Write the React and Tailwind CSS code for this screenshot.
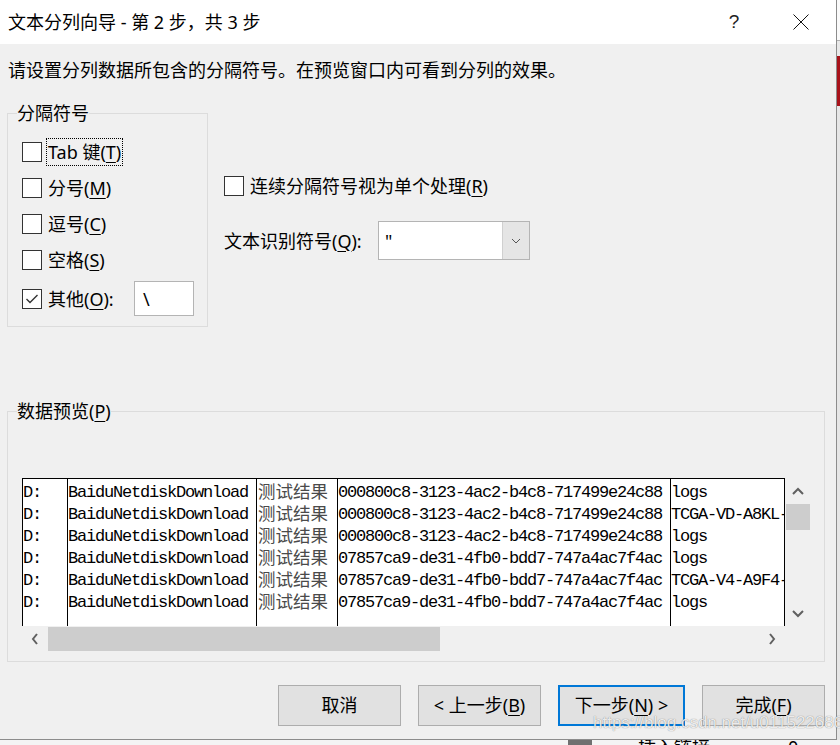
import React from 'react';

const ui = "font-['Noto_Sans','Noto_Sans_CJK_SC',sans-serif]";
const mono = "font-['Liberation_Mono','Noto_Sans_CJK_SC',monospace] text-[17px] tracking-[-1.2px] text-black";
const cjk = "font-['Noto_Sans_CJK_SC',sans-serif] text-[17.5px] text-[#4a4a4a]";

const ROWS = [
  ['000800c8-3123-4ac2-b4c8-717499e24c88', 'logs'],
  ['000800c8-3123-4ac2-b4c8-717499e24c88', 'TCGA-VD-A8KL-01A'],
  ['000800c8-3123-4ac2-b4c8-717499e24c88', 'logs'],
  ['07857ca9-de31-4fb0-bdd7-747a4ac7f4ac', 'logs'],
  ['07857ca9-de31-4fb0-bdd7-747a4ac7f4ac', 'TCGA-V4-A9F4-01A'],
  ['07857ca9-de31-4fb0-bdd7-747a4ac7f4ac', 'logs'],
];

function Box({ checked }) {
  return (
    <span className="w-[20px] h-[20px] shrink-0 border border-[#333] bg-white flex items-center justify-center">
      {checked && (
        <svg width="16" height="16" viewBox="0 0 16 16">
          <polyline points="2.5,8 6,11.5 13.5,4" fill="none" stroke="#333" strokeWidth="1.4" />
        </svg>
      )}
    </span>
  );
}

function Key({ k }) {
  return <u className="underline underline-offset-[3px] decoration-1">{k}</u>;
}

function Chevron({ dir }) {
  const pts = {
    up: '1,7 6,2 11,7',
    down: '1,2 6,7 11,2',
    left: '6,1 2,6 6,11',
    right: '2,1 6,6 2,11',
  }[dir];
  const vert = dir === 'up' || dir === 'down';
  return (
    <svg width={vert ? 12 : 8} height={vert ? 9 : 12} viewBox={vert ? '0 0 12 9' : '0 0 8 12'}>
      <polyline points={pts} fill="none" stroke="#606060" strokeWidth="2" />
    </svg>
  );
}

function Option({ label, k, focus, checked }) {
  return (
    <div className="flex items-center h-[36px]">
      <Box checked={checked} />
      <span className={`ml-[4px] px-[1px] py-[1px] leading-[24px] border ${focus ? 'border-dotted border-black' : 'border-transparent'}`}>
        {label}(<Key k={k} />)
      </span>
    </div>
  );
}

function Btn({ children, primary, w = 'w-[123px]' }) {
  return (
    <div className={`${w} h-[41px] flex items-center justify-center bg-[#e1e1e1] text-[18px] ${primary ? 'border-2 border-[#0078d7]' : 'border border-[#adadad]'}`}>
      {children}
    </div>
  );
}

export default function App() {
  return (
    <div className={`w-[840px] h-[745px] overflow-hidden bg-[#f4f4f4] flex flex-col ${ui} text-black`}>
      <div className="flex h-[740px] shrink-0">
        <div className="relative w-[837px] flex flex-col border-r border-b border-[#8c8c8c] bg-[#f0f0f0]">
          {/* title bar */}
          <div className="h-[44px] shrink-0 bg-white flex items-center pl-[8px]">
            <span className="text-[18px] leading-[24px]">文本分列向导 - 第 2 步，共 3 步</span>
            <span className="ml-auto w-[24px] text-center text-[19px] font-light font-['Liberation_Sans',sans-serif] text-[#222]">?</span>
            <div className="ml-[32px] w-[46px] flex justify-center mr-[12px]">
              <svg width="16" height="16" viewBox="0 0 16 16">
                <line x1="0.5" y1="0.5" x2="15.5" y2="15.5" stroke="#111" strokeWidth="1" />
                <line x1="15.5" y1="0.5" x2="0.5" y2="15.5" stroke="#111" strokeWidth="1" />
              </svg>
            </div>
          </div>

          {/* body */}
          <div className="flex-1 pl-[7px] pr-[11px] text-[18px]">
            <div className="pt-[14px] pl-[1px] leading-[24px]">请设置分列数据所包含的分隔符号。在预览窗口内可看到分列的效果。</div>

            <div className="mt-[19px] flex items-start">
              <fieldset className="w-[201px] border border-[#dcdcdc] pl-[14px] pt-[9px] pb-[10px]">
                <legend className="ml-[-5px] leading-[24px]">分隔符号</legend>
                <Option label="Tab 键" k="T" focus />
                <Option label="分号" k="M" />
                <Option label="逗号" k="C" />
                <Option label="空格" k="S" />
                <div className="mt-[3px] h-[35px] flex items-center">
                  <Box checked />
                  <span className="ml-[4px] w-[88px] px-[2px] leading-[24px]">其他(<Key k="O" />):</span>
                  <div className="w-[60px] h-[35px] bg-white border border-[#b4b4b4] pl-[8px] flex items-center leading-[24px]">\</div>
                </div>
              </fieldset>

              <div className="ml-[16px] pt-[73px] flex flex-col">
                <div className="h-[24px] flex items-center">
                  <Box />
                  <span className="ml-[6px] leading-[24px]">连续分隔符号视为单个处理(<Key k="R" />)</span>
                </div>
                <div className="mt-[23px] h-[39px] flex items-center">
                  <span className="w-[154px] leading-[24px]">文本识别符号(<Key k="Q" />):</span>
                  <div className="w-[152px] h-[39px] bg-white border border-[#b4b4b4] flex">
                    <div className="flex-1 pl-[6px] flex items-center leading-[24px]">"</div>
                    <div className="w-[27px] bg-[#e5e5e5] border-l border-[#d0d0d0] flex items-center justify-center">
                      <svg width="10" height="6" viewBox="0 0 10 6">
                        <polyline points="1,1 5,5 9,1" fill="none" stroke="#555" strokeWidth="1" />
                      </svg>
                    </div>
                  </div>
                </div>
              </div>
            </div>

            <fieldset className="mt-[72px] border border-[#dcdcdc] pl-[14px] pt-[55px] pb-[10px]">
              <legend className="ml-[-5px] leading-[24px]">数据预览(<Key k="P" />)</legend>
              <div className="flex">
                <div className="w-[763px] flex flex-col">
                  <div className="h-[148px] border-t border-black bg-white flex overflow-hidden">
                    <div className={`w-[45px] border-l border-black pt-[3px] ${mono}`}>
                      {ROWS.map((_, i) => <div key={i} className="h-[22px] leading-[22px]">D:</div>)}
                    </div>
                    <div className={`w-[189px] border-l border-black pt-[3px] ${mono}`}>
                      {ROWS.map((_, i) => <div key={i} className="h-[22px] leading-[22px] whitespace-nowrap">BaiduNetdiskDownload</div>)}
                    </div>
                    <div className={`w-[81px] border-l border-black pt-[1px] pl-[1px] ${cjk}`}>
                      {ROWS.map((_, i) => <div key={i} className="h-[22px] leading-[22px] whitespace-nowrap">测试结果</div>)}
                    </div>
                    <div className={`w-[333px] border-l border-black pt-[3px] ${mono}`}>
                      {ROWS.map((r, i) => <div key={i} className="h-[22px] leading-[22px] whitespace-nowrap">{r[0]}</div>)}
                    </div>
                    <div className={`w-[115px] border-l border-r border-black pt-[3px] overflow-hidden ${mono}`}>
                      {ROWS.map((r, i) => <div key={i} className="h-[22px] leading-[22px] whitespace-nowrap">{r[1]}</div>)}
                    </div>
                  </div>
                  <div className="h-[25px] flex">
                    <div className="w-[26px] flex items-center justify-center"><Chevron dir="left" /></div>
                    <div className="w-[392px] h-[24px] self-end bg-[#cdcdcd]" />
                    <div className="flex-1" />
                    <div className="w-[26px] flex items-center justify-center"><Chevron dir="right" /></div>
                  </div>
                </div>
                <div className="w-[25px] h-[148px] flex flex-col">
                  <div className="h-[26px] flex items-center justify-center pl-[1px]"><Chevron dir="up" /></div>
                  <div className="h-[26px] w-[24px] ml-[1px] bg-[#cdcdcd]" />
                  <div className="flex-1" />
                  <div className="h-[26px] flex items-center justify-center pl-[1px]"><Chevron dir="down" /></div>
                </div>
              </div>
            </fieldset>

            <div className="mt-[23px] flex justify-end gap-[17px]">
              <Btn>取消</Btn>
              <Btn>&lt; 上一步(<Key k="B" />)</Btn>
              <Btn primary w="w-[127px]">下一步(<Key k="N" />) &gt;</Btn>
              <Btn>完成(<Key k="F" />)</Btn>
            </div>
          </div>

          {/* watermark */}
          <div className="absolute left-[593px] top-[712px] text-[17px] leading-[22px] font-['Liberation_Sans',sans-serif] text-white/85 [text-shadow:0_0_1px_rgba(0,0,0,0.55)] pointer-events-none">
            https://blog.csdn.net/u011522686
          </div>
        </div>
        <div className="w-[3px] flex flex-col">
          <div className="h-[40px] bg-[#fafafa]" />
          <div className="h-[1px] bg-[#b0b0b0]" />
          <div className="h-[15px] bg-[#e8e8e8]" />
          <div className="h-[50px] bg-[#a8121a]" />
          <div className="flex-1 bg-[#e6e6e6]" />
        </div>
      </div>
      <div className="h-[5px] flex overflow-hidden">
        <div className="ml-[568px] w-[24px] bg-[#707070]" />
        <div className="ml-[46px] text-[18px] leading-[20px] mt-[-3px]">插入链接</div>
        <div className="ml-[78px] text-[18px] leading-[20px] mt-[-3px]">0</div>
      </div>
    </div>
  );
}
